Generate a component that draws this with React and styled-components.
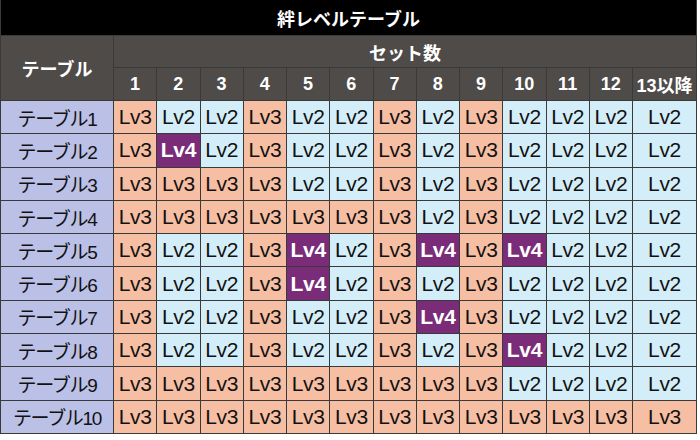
import React from "react";
import styled, { createGlobalStyle } from "styled-components";

const GlobalStyle = createGlobalStyle`
  body {
    margin: 0;
    background: #ffffff;
    font-family: "Liberation Sans", "Noto Sans CJK JP", sans-serif;
  }
`;

const Board = styled.div`
  display: grid;
  grid-template-columns: 112px repeat(12, 42.25px) 63px;
  grid-template-rows: 35px 31px 32px repeat(10, 32.3px);
  gap: 1px;
  padding: 0 1px 1px 1px;
  width: 697px;
  box-sizing: border-box;
  background: #3a3a3a;
`;

const Title = styled.div`
  grid-column: 1 / -1;
  background: #000000;
  color: #ffffff;
  display: flex;
  align-items: center;
  justify-content: center;
  font-family: "Noto Sans CJK JP", sans-serif;
  font-weight: 700;
  font-size: 18px;
  padding-top: 1px;
`;

const HeadCell = styled.div`
  background: #4e4b49;
  color: #ffffff;
  display: flex;
  align-items: center;
  justify-content: center;
  font-weight: 700;
  font-size: 18px;
  grid-row: ${(p) => p.$row || "auto"};
  grid-column: ${(p) => p.$col || "auto"};
  white-space: nowrap;
`;

const RowLabel = styled.div`
  background: #bbc0e7;
  color: #111111;
  display: flex;
  align-items: center;
  justify-content: center;
  font-size: 19px;
  letter-spacing: -1.3px;
  white-space: nowrap;
`;

const tones = {
  2: { bg: "#d4eef9", fg: "#111111", weight: 400 },
  3: { bg: "#f6bea3", fg: "#111111", weight: 400 },
  4: { bg: "#7a2c78", fg: "#ffffff", weight: 700 },
};

const LvCell = styled.div`
  background: ${(p) => tones[p.$lv].bg};
  color: ${(p) => tones[p.$lv].fg};
  font-weight: ${(p) => tones[p.$lv].weight};
  display: flex;
  align-items: center;
  justify-content: center;
  font-size: 21px;
  letter-spacing: -0.3px;
`;

const columns = ["1", "2", "3", "4", "5", "6", "7", "8", "9", "10", "11", "12", "13以降"];

const tableRows = [
  [3, 2, 2, 3, 2, 2, 3, 2, 3, 2, 2, 2, 2],
  [3, 4, 2, 3, 2, 2, 3, 2, 3, 2, 2, 2, 2],
  [3, 3, 3, 3, 2, 2, 3, 2, 3, 2, 2, 2, 2],
  [3, 3, 3, 3, 3, 3, 3, 2, 3, 2, 2, 2, 2],
  [3, 2, 2, 3, 4, 2, 3, 4, 3, 4, 2, 2, 2],
  [3, 2, 2, 3, 4, 2, 3, 2, 3, 2, 2, 2, 2],
  [3, 2, 2, 3, 2, 2, 3, 4, 3, 2, 2, 2, 2],
  [3, 2, 2, 3, 2, 2, 3, 2, 3, 4, 2, 2, 2],
  [3, 3, 3, 3, 3, 3, 3, 3, 3, 2, 2, 2, 2],
  [3, 3, 3, 3, 3, 3, 3, 3, 3, 3, 3, 3, 3],
];

export default function App() {
  return (
    <>
      <GlobalStyle />
      <Board>
        <Title>絆レベルテーブル</Title>
        <HeadCell $row="2 / 4" $col="1">
          テーブル
        </HeadCell>
        <HeadCell $col="2 / -1">セット数</HeadCell>
        {columns.map((c) => (
          <HeadCell key={c}>{c}</HeadCell>
        ))}
        {tableRows.map((row, i) => (
          <React.Fragment key={i}>
            <RowLabel>テーブル{i + 1}</RowLabel>
            {row.map((lv, j) => (
              <LvCell key={j} $lv={lv}>
                Lv{lv}
              </LvCell>
            ))}
          </React.Fragment>
        ))}
      </Board>
    </>
  );
}
